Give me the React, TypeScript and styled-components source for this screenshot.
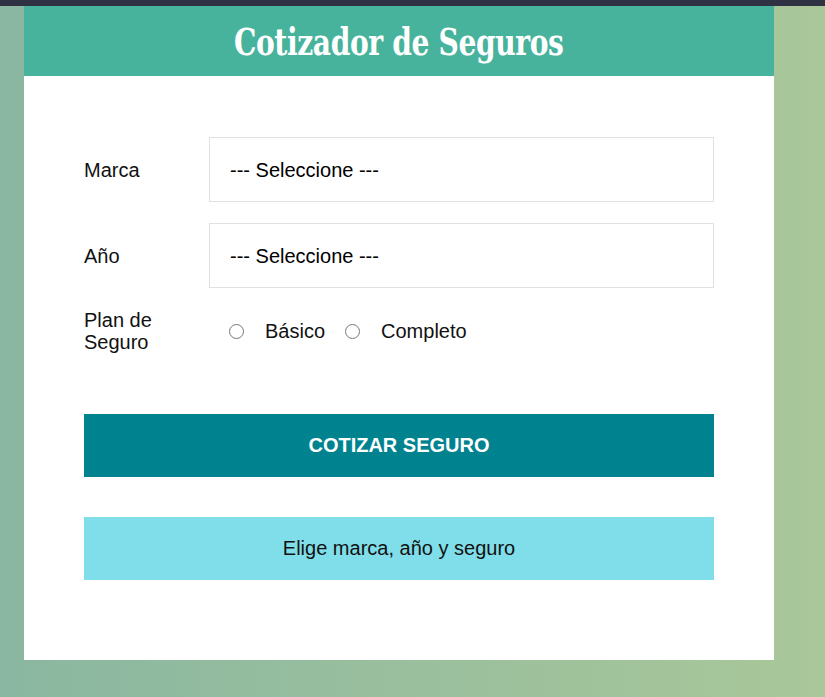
import React from "react";
import styled, { createGlobalStyle } from "styled-components";

const Global = createGlobalStyle`
  html, body { margin: 0; padding: 0; }
  body {
    min-height: 697px;
    border-top: 6px solid #2f3243;
    box-sizing: border-box;
    background: linear-gradient(to right, #8ab7a1 0%, #a9c799 100%);
    font-family: "Liberation Sans", Arial, sans-serif;
  }
`;

const Page = styled.div`
  padding-left: 24px;
`;

const Card = styled.div`
  width: 750px;
  background: #fff;
`;

const Header = styled.header`
  height: 70px;
  background: #47b39c;
  display: flex;
  align-items: center;
  justify-content: center;
`;

const Title = styled.h1`
  margin: 0;
  color: #fff;
  font-family: "DejaVu Serif", serif;
  font-weight: bold;
  font-size: 38px;
  letter-spacing: -0.5px;
  white-space: nowrap;
  transform: scaleX(0.74);
`;

const Form = styled.form`
  padding: 61px 60px 80px;
  display: flex;
  flex-direction: column;
`;

const Field = styled.div<{ $tall?: boolean }>`
  display: flex;
  align-items: center;
  margin-bottom: 21px;
  min-height: ${(p) => (p.$tall ? "65px" : "44px")};
`;

const Label = styled.label`
  flex: 0 0 125px;
  font-size: 20px;
  color: #111;
  line-height: 22px;
`;

const Select = styled.select`
  flex: 1;
  height: 65px;
  box-sizing: border-box;
  border: 1px solid #e1e1e1;
  background: #fff;
  padding: 0 0 0 20px;
  font-family: "Liberation Sans", Arial, sans-serif;
  font-size: 20px;
  color: #000;
  appearance: none;
  -webkit-appearance: none;
  border-radius: 0;
  outline: none;
`;

const Radio = styled.input`
  width: 15px;
  height: 15px;
  margin: 0 21px 0 20px;
  accent-color: #767676;
`;

const RadioText = styled.span`
  font-size: 20px;
  color: #111;
`;

const Button = styled.button`
  margin-top: 40px;
  height: 63px;
  border: none;
  background: #00838f;
  color: #fff;
  font-family: "Liberation Sans", Arial, sans-serif;
  font-weight: bold;
  font-size: 20px;
  text-transform: uppercase;
`;

const Message = styled.div`
  margin-top: 40px;
  height: 63px;
  background: #80deea;
  display: flex;
  align-items: center;
  justify-content: center;
  font-size: 20px;
  color: #111;
`;

export default function App() {
  return (
    <>
      <Global />
      <Page>
        <Card>
          <Header>
            <Title>Cotizador de Seguros</Title>
          </Header>
          <Form onSubmit={(e) => e.preventDefault()}>
            <Field $tall>
              <Label>Marca</Label>
              <Select defaultValue="">
                <option value="">--- Seleccione ---</option>
              </Select>
            </Field>
            <Field $tall>
              <Label>Año</Label>
              <Select defaultValue="">
                <option value="">--- Seleccione ---</option>
              </Select>
            </Field>
            <Field>
              <Label>Plan de Seguro</Label>
              <Radio type="radio" name="plan" value="basico" />
              <RadioText>Básico</RadioText>
              <Radio type="radio" name="plan" value="completo" />
              <RadioText>Completo</RadioText>
            </Field>
            <Button type="submit">Cotizar Seguro</Button>
            <Message>Elige marca, año y seguro</Message>
          </Form>
        </Card>
      </Page>
    </>
  );
}
